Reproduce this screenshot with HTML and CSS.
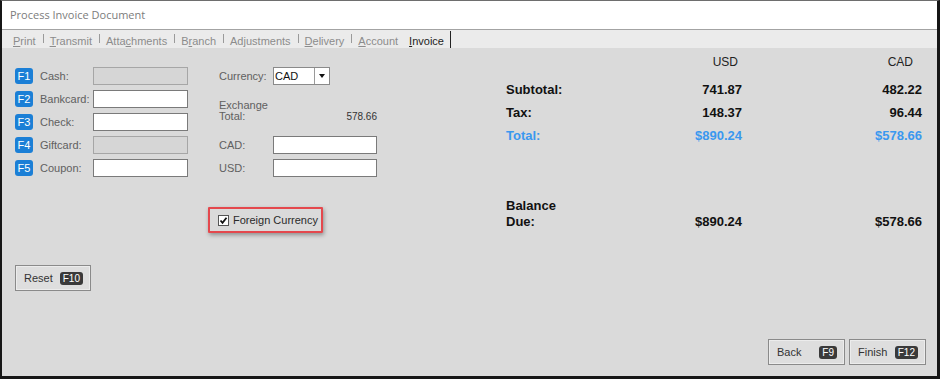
FILE: index.html
```html
<!DOCTYPE html>
<html lang="en">
<head>
	<title>Process Invoice Document</title>
	<link rel="stylesheet" href="styles.css">
</head>

<body>
	<div class="window">
		<div class="titlebar">Process Invoice Document</div>

		<nav class="tabs">
			<span class="tab"><u>P</u>rint</span>
			<span class="tab"><u>T</u>ransmit</span>
			<span class="tab">Atta<u>c</u>hments</span>
			<span class="tab">B<u>r</u>anch</span>
			<span class="tab">Ad<u>j</u>ustments</span>
			<span class="tab"><u>D</u>elivery</span>
			<span class="tab last"><u>A</u>ccount</span>
			<span class="tab active"><u>I</u>nvoice</span>
		</nav>

		<div class="content">
			<div class="main">
				<div class="payments">
					<div class="pay-row"><span class="fkey">F1</span><span class="label">Cash:</span><div class="field disabled"></div></div>
					<div class="pay-row"><span class="fkey">F2</span><span class="label">Bankcard:</span><div class="field"></div></div>
					<div class="pay-row"><span class="fkey">F3</span><span class="label">Check:</span><div class="field"></div></div>
					<div class="pay-row"><span class="fkey">F4</span><span class="label">Giftcard:</span><div class="field disabled"></div></div>
					<div class="pay-row"><span class="fkey">F5</span><span class="label">Coupon:</span><div class="field"></div></div>

					<button class="btn reset">Reset <span class="kbd">F10</span></button>
				</div>

				<div class="currency">
					<div class="cur-row">
						<span class="label">Currency:</span>
						<div class="select"><span class="select-text">CAD</span><span class="select-btn"><span class="arrow"></span></span></div>
					</div>
					<div class="exchange">
						<span class="label">Exchange<br>Total:</span>
						<span class="ex-value">578.66</span>
					</div>
					<div class="cur-row cad"><span class="label">CAD:</span><div class="field wide"></div></div>
					<div class="cur-row"><span class="label">USD:</span><div class="field wide"></div></div>

					<div class="foreign">
						<span class="check"><svg width="9" height="9" viewBox="0 0 9 9"><polyline points="1.5,4.5 3.5,6.8 7.5,1.8" fill="none" stroke="#111" stroke-width="1.8"/></svg></span>
						Foreign Currency
					</div>
				</div>

				<div class="totals">
					<div class="head"></div>
					<div class="head usd">USD</div>
					<div class="head cad">CAD</div>

					<div class="row first">Subtotal:</div>
					<div class="row num first">741.87</div>
					<div class="row num first">482.22</div>

					<div class="row">Tax:</div>
					<div class="row num">148.37</div>
					<div class="row num">96.44</div>

					<div class="row blue">Total:</div>
					<div class="row num blue">$890.24</div>
					<div class="row num blue">$578.66</div>

					<div class="balance">Balance<br>Due:</div>
					<div class="balance num">$890.24</div>
					<div class="balance num">$578.66</div>
				</div>
			</div>

			<div class="actions">
				<button class="btn">Back <span class="kbd">F9</span></button>
				<button class="btn">Finish <span class="kbd">F12</span></button>
			</div>
		</div>
	</div>
</body>

</html>
```

FILE: styles.css
```css
body {
	margin: 0;
	font-family: "Liberation Sans", Arial, sans-serif;
	font-size: 11px;
	background: #ffffff;
}

.window {
	width: 940px;
	height: 379px;
	box-sizing: border-box;
	border-top: 1px solid #6e6e6e;
	border-left: 2px solid #161616;
	border-right: 3px solid #161616;
	border-bottom: 3px solid #161616;
	display: flex;
	flex-direction: column;
	background: #dadada;
}

.titlebar {
	height: 28px;
	line-height: 28px;
	padding-left: 8px;
	background: #ffffff;
	border-bottom: 1px solid #a3a3a3;
	color: #7c7c7c;
	font-family: "Open Sans", "Noto Sans", sans-serif;
	font-size: 11px;
}

/* tab strip */
.tabs {
	height: 18px;
	display: flex;
	align-items: center;
	padding-left: 4px;
	background: #ebebeb;
}

.tab {
	position: relative;
	padding: 0 7px;
	color: #8c8c8c;
	line-height: 18px;
	padding-top: 3px;
}

.tab::after {
	content: "";
	position: absolute;
	right: -1px;
	top: 5px;
	height: 9px;
	border-right: 1px solid #9a9a9a;
}

.tab.last::after {
	display: none;
}

.tab.active {
	color: #1d1d1d;
	margin-left: -3px;
}

.tab.active::after {
	top: 2px;
	height: 17px;
	right: 0;
	border-right: 1px solid #222;
}

.content {
	flex: 1;
	display: flex;
	flex-direction: column;
	padding: 0 11px 11px 13px;
}

.main {
	display: flex;
	align-items: flex-start;
}

.label {
	color: #606060;
}

.field {
	height: 18px;
	width: 95px;
	box-sizing: border-box;
	background: #ffffff;
	border: 1px solid #7a7a7a;
}

.field.disabled {
	background: #d6d6d6;
	border-color: #a6a6a6;
}

.field.wide {
	width: 104px;
}

/* left column */
.payments {
	display: flex;
	flex-direction: column;
	gap: 5px;
	margin-top: 19px;
}

.pay-row {
	display: flex;
	align-items: center;
	height: 18px;
}

.pay-row .label {
	width: 53px;
}

.fkey {
	width: 18px;
	height: 16px;
	margin-right: 7px;
	border-radius: 3px;
	background: #1b7fd6;
	color: #ffffff;
	font-size: 11px;
	line-height: 16px;
	text-align: center;
}

.btn {
	width: 77px;
	height: 26px;
	box-sizing: border-box;
	display: flex;
	align-items: center;
	justify-content: space-between;
	padding: 0 7px 0 8px;
	background: #dedede;
	border: 1px solid #8a8a8a;
	box-shadow: inset 0 0 0 1px #ececec;
	font-family: "Liberation Sans", Arial, sans-serif;
	font-size: 11px;
	color: #333;
}

.reset {
	width: 76px;
	margin-top: 83px;
}

.kbd {
	height: 13px;
	line-height: 13px;
	padding: 0 3px;
	border-radius: 3px;
	background: #3a3a3a;
	color: #ffffff;
	font-size: 10px;
}

/* middle column */
.currency {
	margin-left: 31px;
	margin-top: 19px;
	width: 158px;
	display: flex;
	flex-direction: column;
}

.cur-row {
	display: flex;
	align-items: center;
	height: 18px;
}

.cur-row .label {
	width: 54px;
}

.cur-row.cad {
	margin-top: 14px;
	margin-bottom: 5px;
}

.select {
	width: 57px;
	height: 18px;
	box-sizing: border-box;
	display: flex;
	background: #ffffff;
	border: 1px solid #8a8a8a;
}

.select-text {
	flex: 1;
	line-height: 16px;
	padding-left: 1px;
	color: #111;
}

.select-btn {
	width: 14px;
	border-left: 1px solid #9a9a9a;
	display: flex;
	align-items: center;
	justify-content: center;
}

.arrow {
	border-left: 3px solid transparent;
	border-right: 3px solid transparent;
	border-top: 4px solid #111;
}

.exchange {
	margin-top: 15px;
	display: flex;
	justify-content: space-between;
	align-items: flex-end;
	line-height: 11px;
}

.ex-value {
	color: #333;
	font-size: 10px;
}

.foreign {
	margin-top: 30px;
	margin-left: -11px;
	width: 115px;
	height: 26px;
	box-sizing: border-box;
	display: flex;
	align-items: center;
	padding-left: 8px;
	border: 2px solid #e4484d;
	border-radius: 1px;
	box-shadow: 1px 2px 4px rgba(0, 0, 0, 0.35);
	color: #2a2a2a;
}

.check {
	width: 11px;
	height: 11px;
	box-sizing: border-box;
	margin-right: 4px;
	background: #ffffff;
	border: 1px solid #555;
	display: flex;
	align-items: center;
	justify-content: center;
}

/* totals */
.totals {
	margin-left: auto;
	margin-right: 4px;
	margin-top: 7px;
	display: grid;
	grid-template-columns: 120px 116px 180px;
	font-size: 13px;
	font-weight: bold;
	color: #111;
}

.head {
	font-size: 12px;
	font-weight: normal;
	line-height: 14px;
	text-align: right;
	margin-bottom: 9px;
	color: #222;
}

.head.usd {
	padding-right: 4px;
}

.head.cad {
	padding-right: 9px;
}

.row {
	line-height: 23px;
}

.num {
	text-align: right;
}

.blue {
	color: #3a98ef;
}

.balance {
	margin-top: 51px;
	line-height: 16px;
	align-self: end;
}

.actions {
	margin-top: auto;
	display: flex;
	justify-content: flex-end;
	gap: 4px;
}
```
